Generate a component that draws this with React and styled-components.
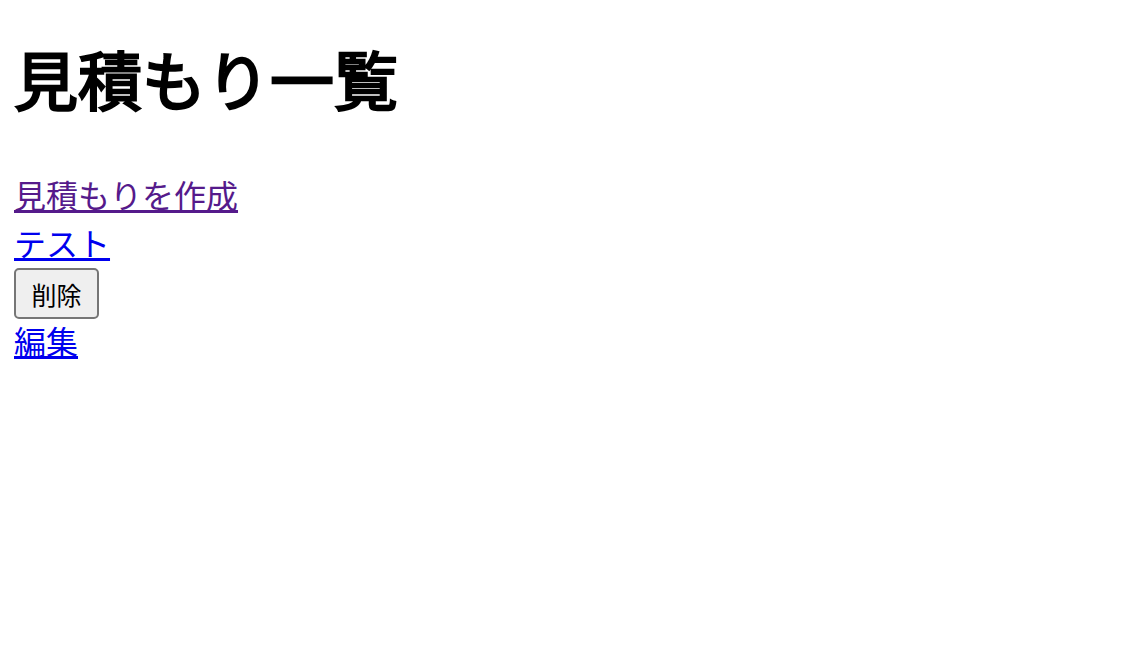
import React from "react";
import styled, { createGlobalStyle } from "styled-components";

const GlobalStyle = createGlobalStyle`
  body {
    margin: 0;
    background: #ffffff;
    font-family: "Noto Sans CJK JP", "Noto Sans", sans-serif;
  }
`;

const Page = styled.div`
  display: flex;
  flex-direction: column;
  align-items: flex-start;
  padding: 0 14px;
`;

const Title = styled.h1`
  margin: 36px 0 55px;
  font-size: 64px;
  font-weight: 400;
  -webkit-text-stroke: 2.4px #000;
  line-height: 82px;
  color: #000;
`;

const Row = styled.div`
  font-size: 32px;
  line-height: 42px;
  padding-bottom: 6px;
`;

const Link = styled.a`
  color: ${(p) => (p.$visited ? "#551a8b" : "#0000ee")};
  text-decoration: underline;
  text-decoration-thickness: 3px;
  text-underline-offset: 2px;
  cursor: pointer;
`;

const DeleteButton = styled.button`
  height: 51px;
  width: 85px;
  margin-top: -1px;
  padding: 0;
  font-family: "Noto Sans CJK JP", "Noto Sans", sans-serif;
  font-size: 25px;
  color: #000;
  background: #efefef;
  border: 2px solid #767676;
  border-radius: 5px;
`;

const App = () => {
  const estimates = [{ id: 1, name: "テスト" }];

  return (
    <>
      <GlobalStyle />
      <Page>
        <Title>見積もり一覧</Title>
        <Row>
          <Link href="#" $visited>
            見積もりを作成
          </Link>
        </Row>
        {estimates.map((item) => (
          <React.Fragment key={item.id}>
            <Row>
              <Link href="#">{item.name}</Link>
            </Row>
            <DeleteButton>削除</DeleteButton>
            <Row>
              <Link href="#">編集</Link>
            </Row>
          </React.Fragment>
        ))}
      </Page>
    </>
  );
};

export default App;
